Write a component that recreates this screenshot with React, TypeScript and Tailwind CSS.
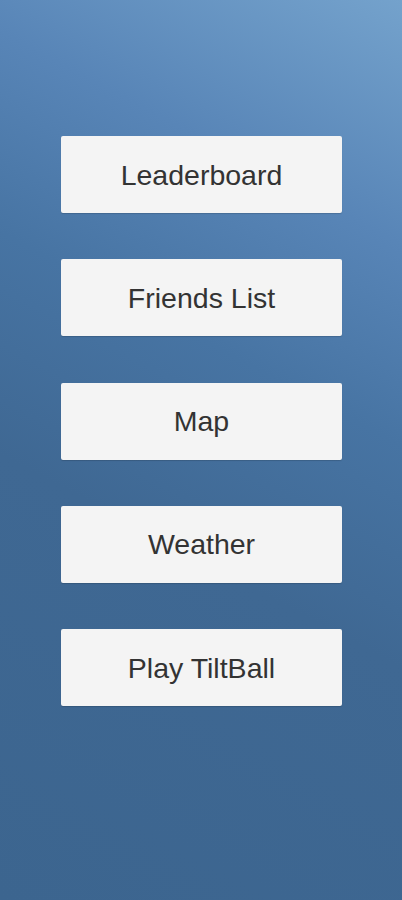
const ITEMS = ['Leaderboard', 'Friends List', 'Map', 'Weather', 'Play TiltBall']

export default function App() {
  return (
    <div className="min-h-[900px] w-full bg-[linear-gradient(28deg,#3c658f_0%,#3f6893_40%,#4774a3_60%,#5885b7_78%,#74a2cc_100%)] pl-[61px] pt-[136px] font-['Liberation_Sans',Arial,sans-serif]">
      <div className="flex w-[281px] flex-col gap-[46.25px]">
        {ITEMS.map(label => (
          <button
            key={label}
            className="flex h-[77px] w-full items-center justify-center rounded-[2px] bg-[#f4f4f4] pt-px text-[28.5px] text-[#333333] shadow-[0_1px_1px_rgba(0,0,0,0.15)]"
          >
            {label}
          </button>
        ))}
      </div>
    </div>
  )
}
